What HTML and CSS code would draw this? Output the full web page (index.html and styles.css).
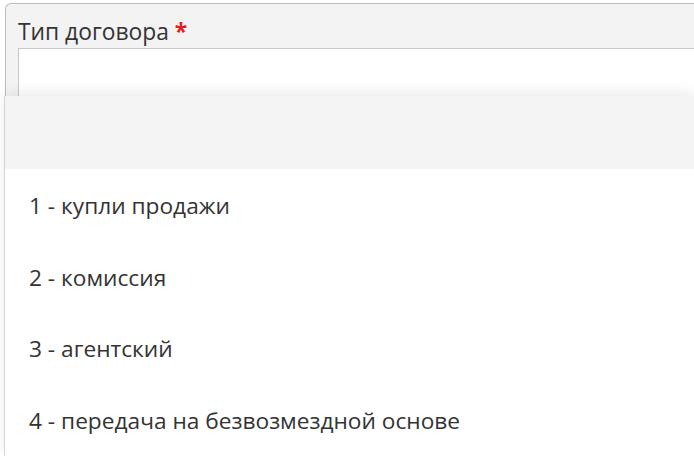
FILE: index.html
```html
<!DOCTYPE html>
<html lang="ru">
<head>
<meta charset="utf-8">
<link rel="stylesheet" href="styles.css">
</head>
<body>
<div class="panel">
  <label class="label">Тип договора <span class="req">*</span></label>
  <div class="input"></div>
</div>
<div class="dropdown">
  <div class="search"></div>
  <ul class="list">
    <li>1 - купли продажи</li>
    <li>2 - комиссия</li>
    <li>3 - агентский</li>
    <li>4 - передача на безвозмездной основе</li>
  </ul>
</div>
</body>
</html>
```
FILE: styles.css
```css
html, body {
  margin: 0;
  padding: 0;
  background: #fff;
  width: 694px;
  height: 456px;
  overflow: hidden;
  font-family: "Open Sans", "Noto Sans", sans-serif;
  color: #333;
}
.panel {
  margin: 3px 0 0 5px;
  height: 460px;
  box-sizing: border-box;
  background: #f3f3f3;
  border: 1px solid #bdbdbd;
  border-right: none;
  border-bottom: none;
  border-radius: 6px 0 0 0;
  padding: 14px 0 0 12px;
}
.label {
  display: block;
  font-size: 22.8px;
  line-height: 28px;
  height: 30px;
}
.req {
  color: #e0201c;
  font-weight: bold;
}
.input {
  height: 60px;
  background: #fff;
  border: 1px solid #c8c8c8;
  border-right: none;
}
.dropdown {
  position: absolute;
  left: 4px;
  top: 96px;
  right: 0;
  bottom: 0;
  background: #fff;
  border-left: 1px solid #d6d6d6;
  box-shadow: 0 -4px 12px rgba(0, 0, 0, 0.08);
}
.search {
  height: 73px;
  background: #f4f4f4;
}
.list {
  list-style: none;
  margin: 0;
  padding: 0;
}
.list li {
  height: 71.5px;
  line-height: 71.5px;
  padding-left: 24px;
  font-size: 22.7px;
  color: #333;
  position: relative;
  top: 1px;
}
```
